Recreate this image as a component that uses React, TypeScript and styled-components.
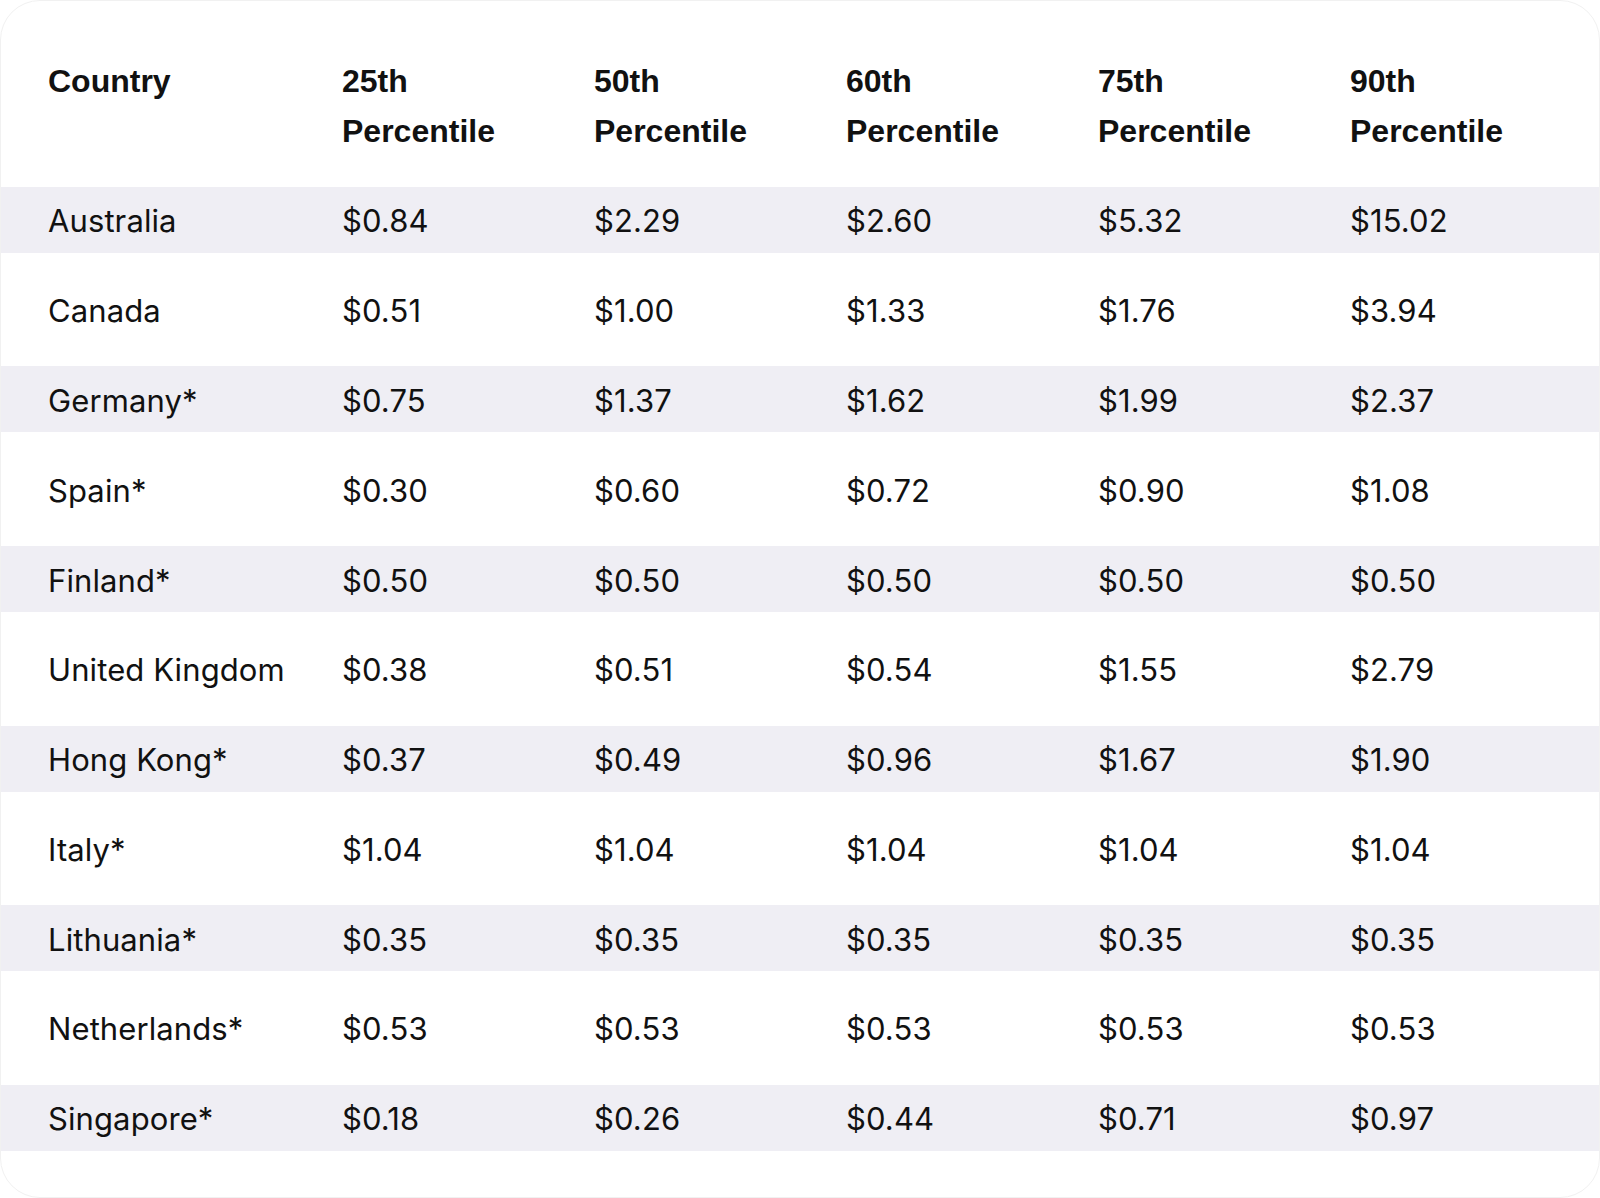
import React from 'react';
import styled, { createGlobalStyle } from 'styled-components';

const GlobalStyle = createGlobalStyle`
  html, body {
    margin: 0;
    padding: 0;
    background: #ffffff;
  }
  * {
    box-sizing: border-box;
  }
`;

const Card = styled.div`
  width: 1600px;
  height: 1198px;
  background: #ffffff;
  border: 1px solid #f1f1f1;
  border-radius: 40px;
  overflow: hidden;
  color: #111111;
`;

const Grid = styled.div`
  display: grid;
  grid-template-columns: 294px repeat(4, 252px) 1fr;
  padding-left: 47px;
`;

const HeaderRow = styled(Grid)`
  padding-top: 55px;
  padding-bottom: 19px;
`;

const HeaderCell = styled.div`
  font-family: 'Liberation Sans', Arial, sans-serif;
  font-weight: 700;
  font-size: 32px;
  line-height: 50px;
  width: 200px;
`;

const RowWrap = styled.div`
  padding: 11.9px 0;
`;

const Row = styled(Grid)<{ $shaded: boolean }>`
  height: 66px;
  align-items: center;
  padding-top: 2px;
  background: ${(p) => (p.$shaded ? '#efeef4' : 'transparent')};
`;

const Cell = styled.div`
  font-family: Inter, 'Noto Sans', sans-serif;
  font-weight: 400;
  font-size: 31px;
  line-height: 1;
  letter-spacing: 0.1px;
`;

const headers = [
  'Country',
  '25th Percentile',
  '50th Percentile',
  '60th Percentile',
  '75th Percentile',
  '90th Percentile',
];

const rows: string[][] = [
  ['Australia', '$0.84', '$2.29', '$2.60', '$5.32', '$15.02'],
  ['Canada', '$0.51', '$1.00', '$1.33', '$1.76', '$3.94'],
  ['Germany*', '$0.75', '$1.37', '$1.62', '$1.99', '$2.37'],
  ['Spain*', '$0.30', '$0.60', '$0.72', '$0.90', '$1.08'],
  ['Finland*', '$0.50', '$0.50', '$0.50', '$0.50', '$0.50'],
  ['United Kingdom', '$0.38', '$0.51', '$0.54', '$1.55', '$2.79'],
  ['Hong Kong*', '$0.37', '$0.49', '$0.96', '$1.67', '$1.90'],
  ['Italy*', '$1.04', '$1.04', '$1.04', '$1.04', '$1.04'],
  ['Lithuania*', '$0.35', '$0.35', '$0.35', '$0.35', '$0.35'],
  ['Netherlands*', '$0.53', '$0.53', '$0.53', '$0.53', '$0.53'],
  ['Singapore*', '$0.18', '$0.26', '$0.44', '$0.71', '$0.97'],
];

const App = () => {
  return (
    <>
      <GlobalStyle />
      <Card>
        <HeaderRow>
          {headers.map((h) => (
            <HeaderCell key={h}>
              {h.split(' ').map((part, i) => (
                <div key={i}>{part}</div>
              ))}
            </HeaderCell>
          ))}
        </HeaderRow>
        {rows.map((row, i) => (
          <RowWrap key={row[0]}>
            <Row $shaded={i % 2 === 0}>
              {row.map((value, j) => (
                <Cell key={j}>{value}</Cell>
              ))}
            </Row>
          </RowWrap>
        ))}
      </Card>
    </>
  );
};

export default App;
